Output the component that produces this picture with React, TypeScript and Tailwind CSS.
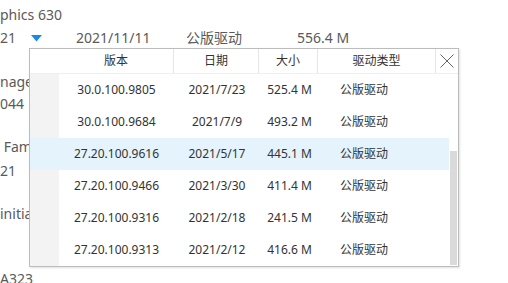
import React from 'react';

const rows = [
  { ver: '30.0.100.9805', date: '2021/7/23', size: '525.4 M', type: '公版驱动', active: false },
  { ver: '30.0.100.9684', date: '2021/7/9', size: '493.2 M', type: '公版驱动', active: false },
  { ver: '27.20.100.9616', date: '2021/5/17', size: '445.1 M', type: '公版驱动', active: true },
  { ver: '27.20.100.9466', date: '2021/3/30', size: '411.4 M', type: '公版驱动', active: false },
  { ver: '27.20.100.9316', date: '2021/2/18', size: '241.5 M', type: '公版驱动', active: false },
  { ver: '27.20.100.9313', date: '2021/2/12', size: '416.6 M', type: '公版驱动', active: false },
];

const font = "font-['Noto_Sans','Noto_Sans_CJK_SC',sans-serif]";

export default function App() {
  return (
    <div className={`relative w-[508px] h-[283px] overflow-hidden bg-white text-[14px] leading-[22px] text-[#5a5a5a] ${font}`}>
      {/* Background list, scrolled horizontally */}
      <div className="flex flex-col">
        <div className="mt-[4px] h-[22px] whitespace-nowrap">phics 630</div>
        <div className="mt-[1px] h-[22px] flex items-center whitespace-nowrap">
          <span className="w-[31px]">21</span>
          <span className="w-[45px] flex items-center">
            <svg width="11" height="7" viewBox="0 0 11 7">
              <path d="M0 0 L11 0 L5.5 6.5 Z" fill="#1a8ae0" />
            </svg>
          </span>
          <span className="w-[110px]">2021/11/11</span>
          <span className="w-[111px]">公版驱动</span>
          <span>556.4 M</span>
        </div>
        <div className="mt-[22px] h-[22px] whitespace-nowrap">nager</div>
        <div className="h-[22px] whitespace-nowrap">044</div>
        <div className="mt-[21px] h-[22px] whitespace-nowrap">&nbsp;Fam</div>
        <div className="mt-[2px] h-[22px] whitespace-nowrap">21</div>
        <div className="mt-[21px] h-[22px] whitespace-nowrap">initial</div>
        <div className="mt-[43px] h-[22px] whitespace-nowrap">A323</div>
      </div>

      {/* Dropdown popup */}
      <div className="absolute left-[29px] top-[48px] w-[430px] border border-[#bcbcbc] bg-white text-[12px] text-[#333] shadow-[1px_1px_2px_rgba(0,0,0,0.12)]">
        <div className="flex h-[25px] items-center border-b border-[#efefef]">
          <div className="w-[29px] h-full" />
          <div className="w-[115px] h-full flex items-center justify-center border-r border-[#e6e6e6]">版本</div>
          <div className="w-[85px] h-full flex items-center justify-center border-r border-[#e6e6e6]">日期</div>
          <div className="w-[59px] h-full flex items-center justify-center border-r border-[#e6e6e6]">大小</div>
          <div className="w-[118px] h-full flex items-center justify-center border-r border-[#e6e6e6]">驱动类型</div>
          <div className="flex-1 h-full flex items-center justify-center">
            <svg width="14" height="14" viewBox="0 0 14 14">
              <path d="M0.5 0.5 L13.5 13.5 M13.5 0.5 L0.5 13.5" stroke="#666" strokeWidth="1" />
            </svg>
          </div>
        </div>
        <div className="flex h-[192px]">
          <div className="flex-1 flex flex-col">
            {rows.map((r, i) => (
              <div key={i} className={`flex h-[32px] items-center ${r.active ? 'bg-[#e5f3fd]' : ''}`}>
                <div className={`w-[29px] h-full ${r.active ? '' : 'bg-[#f3f3f3]'}`} />
                <div className="w-[115px] text-center">{r.ver}</div>
                <div className="w-[86px] text-center">{r.date}</div>
                <div className="w-[59px] text-center">{r.size}</div>
                <div className="pl-[21px]">{r.type}</div>
              </div>
            ))}
          </div>
          <div className="w-[9px] flex justify-center">
            <div className="mt-[77px] w-[7px] h-[114px] bg-[#dadada]" />
          </div>
        </div>
      </div>
    </div>
  );
}
